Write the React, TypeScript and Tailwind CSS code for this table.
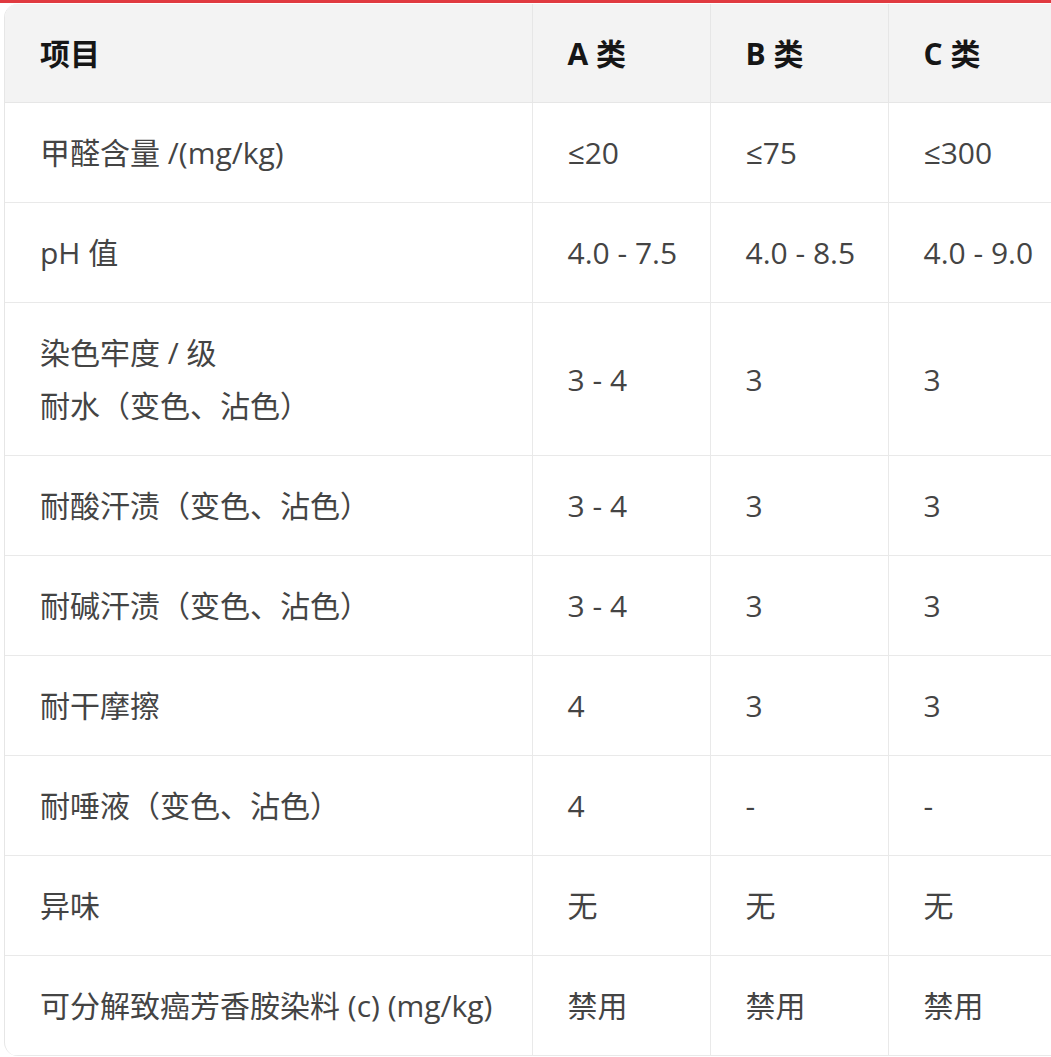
const rows: { item: string[]; a: string; b: string; c: string }[] = [
  { item: ['甲醛含量 /(mg/kg)'], a: '≤20', b: '≤75', c: '≤300' },
  { item: ['pH 值'], a: '4.0 - 7.5', b: '4.0 - 8.5', c: '4.0 - 9.0' },
  { item: ['染色牢度 / 级', '耐水（变色、沾色）'], a: '3 - 4', b: '3', c: '3' },
  { item: ['耐酸汗渍（变色、沾色）'], a: '3 - 4', b: '3', c: '3' },
  { item: ['耐碱汗渍（变色、沾色）'], a: '3 - 4', b: '3', c: '3' },
  { item: ['耐干摩擦'], a: '4', b: '3', c: '3' },
  { item: ['耐唾液（变色、沾色）'], a: '4', b: '-', c: '-' },
  { item: ['异味'], a: '无', b: '无', c: '无' },
  { item: ['可分解致癌芳香胺染料 (c) (mg/kg)'], a: '禁用', b: '禁用', c: '禁用' },
];

const TH = 'pl-[35px] pr-2 pt-[23px] pb-[22px] text-left font-bold text-[#161616] border-r border-b border-[#e6e6e6] align-middle';
const TD = 'pl-[35px] pr-2 py-[23px] text-left font-normal text-[#444444] border-r border-b border-[#e9e9e9] align-middle';

export default function App() {
  return (
    <div
      className="w-[1051px] h-[1057px] overflow-hidden bg-white"
      style={{ fontFamily: '"Open Sans", "Noto Sans CJK SC", sans-serif' }}
    >
      <div className="h-[3px] bg-[#e03a40]" />
      <div className="pl-[4px] pt-[1px]">
        <div className="w-[1080px] rounded-l-[14px] border-l border-[#e6e6e6] overflow-hidden">
          <table className="table-fixed border-collapse w-[1080px] text-[30px] leading-[53px]">
            <colgroup>
              <col className="w-[527px]" />
              <col className="w-[178px]" />
              <col className="w-[178px]" />
              <col />
            </colgroup>
            <thead>
              <tr className="bg-[#f3f3f3]">
                <th className={TH}>项目</th>
                <th className={TH}>A 类</th>
                <th className={TH}>B 类</th>
                <th className={TH}>C 类</th>
              </tr>
            </thead>
            <tbody>
              {rows.map((r, i) => (
                <tr key={i}>
                  <td className={TD}>
                    {r.item.map((l) => (
                      <div key={l} className="whitespace-nowrap">{l}</div>
                    ))}
                  </td>
                  <td className={TD}>{r.a}</td>
                  <td className={TD}>{r.b}</td>
                  <td className={TD}>{r.c}</td>
                </tr>
              ))}
            </tbody>
          </table>
        </div>
      </div>
    </div>
  );
}
